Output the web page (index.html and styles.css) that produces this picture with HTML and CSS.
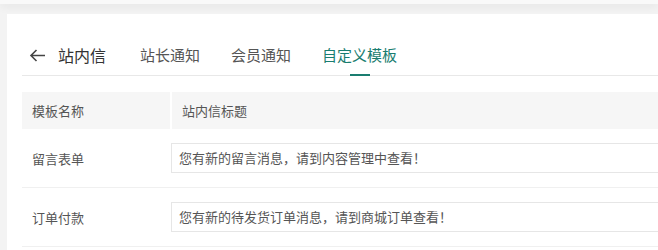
FILE: index.html
```html
<!DOCTYPE html>
<html lang="zh">
<head>
<meta charset="utf-8">
<link rel="stylesheet" href="styles.css">
</head>
<body>
<div class="topbar"></div>
<div class="page">
  <div class="card">
    <div class="tabs">
      <div class="back">
        <svg class="arrow" width="17" height="13" viewBox="0 0 17 13"><path d="M16 6.5H2M7.5 1L2 6.5 7.5 12" fill="none" stroke="#444" stroke-width="1.6"/></svg>
        <span class="title">站内信</span>
      </div>
      <div class="tab">站长通知</div>
      <div class="tab">会员通知</div>
      <div class="tab active">自定义模板</div>
    </div>
    <div class="table">
      <div class="row head">
        <div class="c1">模板名称</div>
        <div class="c2">站内信标题</div>
      </div>
      <div class="row">
        <div class="c1">留言表单</div>
        <div class="c2"><div class="input">您有新的留言消息，请到内容管理中查看！</div></div>
      </div>
      <div class="row">
        <div class="c1">订单付款</div>
        <div class="c2"><div class="input">您有新的待发货订单消息，请到商城订单查看！</div></div>
      </div>
    </div>
  </div>
</div>
</body>
</html>
```
FILE: styles.css
```css
html, body {
  margin: 0;
  padding: 0;
  background: #f3f3f3;
  font-family: "Noto Sans CJK SC", "Noto Sans", sans-serif;
  height: 100%;
  overflow: hidden;
}
.topbar {
  height: 4px;
  background: #f9f9f9;
  box-shadow: 0 2px 8px rgba(0,0,0,0.09);
  position: relative;
}
.page {
  padding: 10px 0 0 7px;
  height: calc(100% - 14px);
}
.card {
  background: #fff;
  padding: 21px 0 0 15px;
  height: calc(100% - 21px);
}
.tabs {
  display: flex;
  align-items: center;
  height: 40px;
  border-bottom: 1px solid #e8e8e8;
}
.back {
  display: flex;
  align-items: center;
  height: 40px;
  padding-left: 7px;
  margin-right: 34px;
}
.arrow {
  margin-right: 12px;
}
.title {
  font-size: 16px;
  color: #333;
}
.tab {
  font-size: 15px;
  color: #555;
  height: 40px;
  line-height: 40px;
  margin-right: 31px;
  position: relative;
}
.tab.active {
  color: #1a7d70;
}
.tab.active::after {
  content: "";
  position: absolute;
  left: 50%;
  bottom: -1px;
  width: 20px;
  margin-left: -10px;
  height: 2px;
  background: #1a7d70;
}
.table {
  margin-top: 16px;
}
.row {
  display: flex;
  height: 58px;
  align-items: center;
  border-bottom: 1px solid #f0f0f0;
  font-size: 13px;
  color: #555;
}
.row.head {
  height: 37px;
  border-bottom: none;
}
.row.head .c1, .row.head .c2 {
  background: #f6f6f6;
  height: 37px;
  line-height: 37px;
}
.c1 {
  width: 138px;
  padding-left: 10px;
  margin-right: 2px;
}
.row .c2 {
  flex: 1;
}
.row.head .c2 {
  padding-left: 10px;
}
.input {
  height: 28px;
  line-height: 28px;
  border: 1px solid #e6e6e6;
  border-right: none;
  padding-left: 7px;
  margin-left: -1px;
  color: #555;
}
```
